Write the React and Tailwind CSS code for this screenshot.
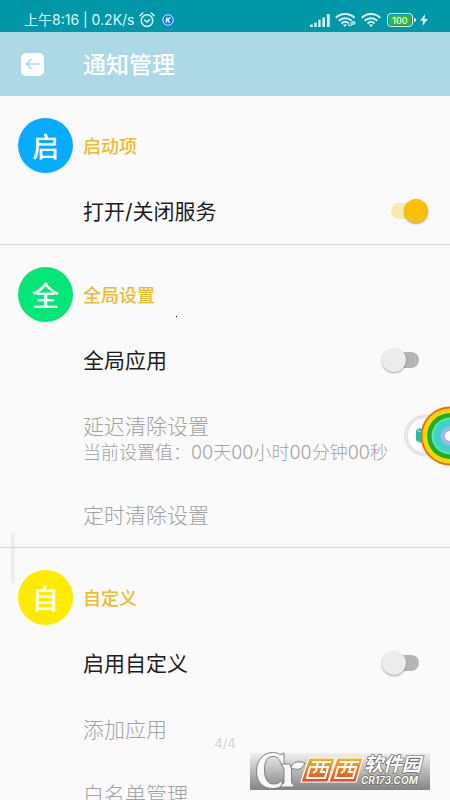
import React from "react";

const FONT = "font-['Inter','Noto_Sans_CJK_SC',sans-serif]";

function StatusBar() {
  return (
    <div className="flex h-8 shrink-0 items-center bg-[#0098a8] pt-2 pr-[22px] pl-6 text-[#dff6f8]">
      <span className="text-[14px] leading-5">上午8:16 | 0.2K/s</span>
      <svg className="ml-1 size-4" viewBox="0 0 16 16" fill="none" stroke="currentColor" strokeWidth="1.5" strokeLinecap="round">
        <circle cx="8" cy="8.6" r="5.8" />
        <path d="M1 3.6 3.8 1M15 3.6 12.2 1M5.6 8l2.4 2 2.6-2.4" />
      </svg>
      <svg className="ml-1.5 size-[14px]" viewBox="0 0 14 14">
        <circle cx="7" cy="7" r="7" fill="#0b7fe8" />
        <circle cx="7" cy="7" r="5.3" fill="none" stroke="#dff2ff" strokeWidth="1" />
        <path d="M5.9 4.4 5.1 9.6M9.4 4.4 5.8 7.4M6.7 6.8l1.7 2.8" fill="none" stroke="#fff" strokeWidth="1.3" />
      </svg>
      <svg className="ml-auto h-[13px] w-5" viewBox="0 0 20 13" fill="currentColor">
        <rect x="0" y="10.4" width="2.8" height="2.6" rx=".6" />
        <rect x="4.3" y="8.4" width="2.4" height="4.6" rx=".6" />
        <rect x="8.2" y="5.8" width="2.4" height="7.2" rx=".6" />
        <rect x="12.4" y="3.4" width="2.6" height="9.6" rx=".6" />
        <rect x="16.9" y="0" width="2.8" height="13" rx=".6" />
      </svg>
      <svg className="ml-[5px] h-[14px] w-[22px]" viewBox="0 0 22 14" fill="none" stroke="currentColor" strokeWidth="2">
        <path d="M.8 4.8C6-.2 14.4-.2 19.6 4.8M3.7 7.8c3.7-3.500 9.300-3.500 13 0M6.500 10.500c2.200-2 5.200-2 7.200-.2" />
        <path d="M7.800 11.600h4.400L10 14z" fill="currentColor" stroke="none" />
        <path d="m15.200 10.600 2.600-1.800c1.600-1 3 .8 1.600 2l-1 .8M18.600 10.200l-2.800 2.200c-1.400 1-2.800-.4-1.600-1.800" strokeWidth="1.100" />
      </svg>
      <svg className="ml-1 h-[14px] w-5" viewBox="0 0 20 14" fill="none" stroke="currentColor" strokeWidth="2">
        <path d="M.8 4.800C6-.2 14-.2 19.200 4.800M3.700 7.800c3.600-3.500 9-3.500 12.600 0M6.500 10.500c2-2 5-2 7 0" />
        <path d="M7.800 11.600h4.400L10 14z" fill="currentColor" stroke="none" />
      </svg>
      <div className="ml-1.5 flex items-center">
        <span className="flex h-[14px] w-[26px] items-center justify-center rounded-[4px] border border-current p-px">
          <span className="flex h-full w-full items-center justify-center rounded-[2px] bg-[#3db33f] text-[9px] leading-none font-medium text-[#e6ffe0]">100</span>
        </span>
        <span className="ml-px h-1 w-0.5 rounded-r bg-current" />
      </div>
      <svg className="ml-1 h-3 w-2" viewBox="0 0 8 12" fill="currentColor">
        <path d="M5 0 .2 6.800h2.900L2.400 12 7.900 4.900H4.600z" />
      </svg>
    </div>
  );
}

function Switch({ id, on, onChange }) {
  return (
    <span className="relative flex h-6 w-[46px] shrink-0 items-center justify-center">
      <input
        id={id}
        type="checkbox"
        role="switch"
        checked={on}
        onChange={onChange}
        className="peer absolute inset-0 z-10 m-0 cursor-pointer appearance-none"
      />
      <span className="h-4 w-7 rounded-full bg-[#b5b5b5] peer-checked:bg-[#fbeab0]" />
      <span className="absolute top-0 left-0 size-6 rounded-full bg-[#ececec] shadow-[0_1px_2px_rgba(0,0,0,0.35)] peer-checked:left-[22px] peer-checked:bg-[#f9bf0a]" />
    </span>
  );
}

function SwitchRow({ id, label, initial = false }) {
  const [on, setOn] = React.useState(initial);
  return (
    <div className="flex h-[65px] items-center justify-between pr-[22px] pb-0.5 pl-[83px]">
      <label htmlFor={id} className="pt-0.5 text-[21px] leading-7 text-[#1c1c1c]">{label}</label>
      <Switch id={id} on={on} onChange={() => setOn(!on)} />
    </div>
  );
}

function DisabledRow({ label }) {
  return (
    <button type="button" disabled className="flex h-[65px] w-full items-center pt-0.5 pl-[83px] text-left text-[21px] leading-7 font-light text-[#a2a2a2]">
      {label}
    </button>
  );
}

function Section({ badge, color, title, divided, children }) {
  return (
    <section className={divided ? "border-b border-[#d9d9d9] pt-[22px]" : "pt-[22px]"}>
      <div className="mb-1.5 flex items-center gap-2.5 pl-[18px]">
        <span className={`flex size-[55px] items-center justify-center rounded-full pt-1 text-[27px] leading-none font-medium text-white ${color}`}>
          {badge}
        </span>
        <h2 className="pt-0.5 text-[18px] leading-6 font-medium text-[#eebb30]">{title}</h2>
      </div>
      {children}
    </section>
  );
}

function FloatingBall() {
  return (
    <svg className="absolute top-[406px] right-0 h-[60px] w-[46px]" viewBox="0 0 46 60">
      <circle cx="21" cy="29.500" r="19" fill="#fff" stroke="#e6e6e6" strokeWidth="4" />
      <path d="M12 23.500 17 22v15l-5-2.500z" fill="#22bfa6" />
      <path d="m12 23.500 5 2.500" stroke="#b5efe4" strokeWidth="1" />
      <circle cx="46" cy="30" r="29.500" fill="#e2701c" />
      <circle cx="46" cy="30" r="27.500" fill="#ffd500" />
      <circle cx="46" cy="30" r="23" fill="#1fae22" />
      <circle cx="46" cy="30" r="18.500" fill="#62e2b4" />
      <circle cx="46" cy="30" r="16.500" fill="#3dd3c6" />
      <circle cx="46" cy="30" r="9.500" fill="#a3b6f0" />
      <circle cx="46" cy="30" r="5" fill="#fff" />
    </svg>
  );
}

function Watermark() {
  return (
    <svg className="absolute right-5 bottom-[9px] h-10 w-[180px]" viewBox="0 0 180 40">
      <defs>
        <linearGradient id="plate" x1="0" y1="0" x2="0" y2="1">
          <stop offset="0" stopColor="#f0f0f0" />
          <stop offset=".5" stopColor="#b8b8b8" />
          <stop offset="1" stopColor="#848484" />
        </linearGradient>
        <linearGradient id="orange" x1="0" y1="0" x2="0" y2="1">
          <stop offset="0" stopColor="#f5b52a" />
          <stop offset="1" stopColor="#e2481c" />
        </linearGradient>
      </defs>
      <rect y="2" width="180" height="37" fill="url(#plate)" />
      <g fill="#f7f7f7" stroke="#777" strokeWidth=".9" strokeLinejoin="round">
        <path d="M34 2v12h-2.500C30 8 27 5.500 23 5.500c-6 0-8.500 5-8.500 13.500 0 9 3.500 14 9 14 4 0 6.500-1.500 8.500-4v6c-3 1.700-6 2.500-9.500 2.500C12 37.500 6.500 30 6.500 20S13 1.500 22.500 1.500c4 0 6.500 1 9 2.500L33 2z" />
        <path d="M32 13h8l1 3.500C43 11 48 9.500 55 12c-2.500 6-7 8-13.500 5V32l2.500 2v2H31v-2l3-2V17l-2-2z" />
      </g>
      <g fill="url(#orange)" stroke="#fff" strokeWidth="1.200">
        <path d="M59 7h26l-7 24H51z" />
        <path d="M87 7h26l-7 24H79z" />
      </g>
      <g fill="none" stroke="#fff" strokeWidth="2">
        <path d="M62 11h19M60 16h18l-3 11H57zM68 11l-2 9-3 2M74 11l-3 10h4M90 11h19M88 16h18l-3 11H85zM96 11l-2 9-3 2M102 11l-3 10h4" />
      </g>
      <g fill="#fff" stroke="#707070" strokeWidth="1.500" paintOrder="stroke" fontStyle="italic" fontWeight="700">
        <text x="114" y="20" fontSize="19" fontFamily="Noto Sans CJK SC, sans-serif">软件园</text>
        <text x="111" y="33" fontSize="10" fontWeight="600" fontFamily="Inter, sans-serif">CR173.COM</text>
      </g>
    </svg>
  );
}

export default function App() {
  return (
    <div className={`relative flex h-screen flex-col overflow-hidden bg-[#fafafa] ${FONT}`}>
      <StatusBar />
      <header className="flex h-16 shrink-0 items-center bg-[#add8e5] pl-[21px]">
        <button type="button" aria-label="返回" className="flex size-[23px] items-center justify-center rounded-[5px] bg-white text-[#add8e5]">
          <svg className="h-3 w-[15px]" viewBox="0 0 15 12" fill="none" stroke="currentColor" strokeWidth="1.500">
            <path d="M14.500 6H1.500M6.500 1l-5 5 5 5" />
          </svg>
        </button>
        <h1 className="ml-[39px] pt-0.5 text-[23px] leading-8 font-medium text-white">通知管理</h1>
      </header>
      <main className="min-h-0 flex-1 overflow-hidden">
        <Section badge="启" color="bg-[#08acff]" title="启动项" divided>
          <SwitchRow id="service" label="打开/关闭服务" initial />
        </Section>
        <Section badge="全" color="bg-[#06e676]" title="全局设置" divided>
          <SwitchRow id="global" label="全局应用" />
          <button type="button" disabled className="flex h-[89px] w-full flex-col pt-5 pl-[83px] text-left font-light whitespace-nowrap text-[#a2a2a2]">
            <span className="text-[21px] leading-7">延迟清除设置</span>
            <span className="text-[18px] leading-6">当前设置值：00天00小时00分钟00秒</span>
          </button>
          <DisabledRow label="定时清除设置" />
        </Section>
        <Section badge="自" color="bg-[#ffea00]" title="自定义">
          <SwitchRow id="custom" label="启用自定义" />
          <DisabledRow label="添加应用" />
          <DisabledRow label="白名单管理" />
        </Section>
      </main>
      <span className="absolute top-[316px] left-[176px] size-px bg-black" />
      <span className="absolute top-[533px] left-[11px] h-[50px] w-1 bg-black/5" />
      <span className="absolute inset-x-0 top-[733px] text-center text-[13px] leading-5 text-[#d2d2d2]">4/4</span>
      <FloatingBall />
      <Watermark />
    </div>
  );
}
